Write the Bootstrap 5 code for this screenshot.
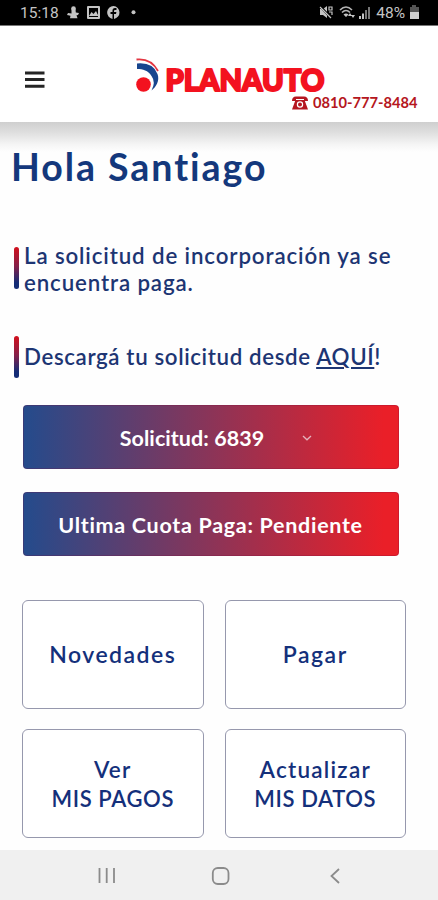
<!DOCTYPE html>
<html lang="es">
<head>
<meta charset="utf-8">
<meta name="viewport" content="width=device-width, initial-scale=1">
<title>Planauto</title>
<link href="https://cdn.jsdelivr.net/npm/bootstrap@5.3.0/dist/css/bootstrap.min.css" rel="stylesheet">
<style>
body{font-family:Lato,"Open Sans",sans-serif;color:#123277;background:#fefefe;height:900px;overflow:hidden}
.status{height:26px;background:#000;color:#c4c4c4;font:15.5px/26px Roboto,sans-serif;padding:1px 17px 0 20px;border-bottom:1px solid #777}
.status svg,.top svg,.keys svg{display:block}
.top{height:96px;padding:31px 20px 0 24px;background:#fff}
.burger{margin-top:14px;padding:0;border:0;background:none}
.brand-block{margin-left:89px;width:296px}
.fade-band{height:30px;background:linear-gradient(#cfcfcf,#dcdcdc 30%,#f5f5f5 75%,#fefefe)}
.hello{font-size:37.5px;line-height:42px;font-weight:700;letter-spacing:1.95px;margin:-6px 0 0 11px;color:#14387c}
.note{gap:5px;padding-left:14px;font-size:22.3px;line-height:27px;font-weight:600;letter-spacing:.87px;color:#1d3573;white-space:nowrap}
.note-bar{width:5px;height:42px;border-radius:3px;flex:none;background:linear-gradient(#d3101c,#872048 45%,#142c76 85%)}
.note a{color:inherit;text-underline-offset:2px;text-decoration-thickness:2px}
.note-one{margin-top:54px}.note-two{margin-top:39.5px;letter-spacing:.62px}
.note-one .note-bar{margin-top:5px}
.bars{padding:27px 39.5px 0 22.5px;gap:22.5px}
.grad{height:64.5px;border:1px solid rgba(120,10,60,.25);border-radius:4px;padding:2px 0 0;color:#fff;font-size:21.5px;font-weight:700;background:linear-gradient(90deg,#244b8c,#ea1f28 96%) border-box;white-space:nowrap}
.grad:hover{color:#fff}
.picker{padding-left:12px;gap:37px}
.tiles{margin:43.5px 32px 0 22px;display:grid;grid-template-columns:1fr 1fr;gap:20.5px 21px}
.tile{height:109px;border:1px solid #9698ad;border-radius:6px;color:#14307b;background:#fff;font-size:22px;line-height:29px;font-weight:600;padding:0;white-space:nowrap}
.keys{height:50px;background:#f0f0f0}
.w1{letter-spacing:.05px}.w2{letter-spacing:.7px}.w3{font-size:23px;letter-spacing:1.5px}.w4{letter-spacing:.6px}.w5{font-size:22.5px;letter-spacing:1.25px}
</style>
<script src="https://cdn.jsdelivr.net/npm/bootstrap@5.3.0/dist/js/bootstrap.bundle.min.js"></script>
</head>
<body class="d-flex flex-column">
<div class="status d-flex align-items-center justify-content-between flex-shrink-0">
  <div class="d-flex align-items-center">
    <span>15:18</span>
    <svg width="80" height="18" viewBox="59 5 80 18" fill="#c4c4c4"><circle cx="73.500" cy="9.500" r="2.300"/><path d="M71.500 10h4l.3 3.500 3.200.5-1 2-1.500.3 1 3H70l.5-2.500-3.500-.8 1-2 3.500.5z"/><path fill-rule="evenodd" d="M88 7h11q1 0 1 1v11q0 1-1 1H88q-1 0-1-1V8q0-1 1-1zm1 2v9h9V9z"/><path d="M89 17l2.500-4 2 2 2.500-3 2.500 5z"/><path d="M113.500 7a6.500 6.500 0 0 0-1 12.900V15h-2v-2h2v-1.500q0-2.500 2.500-2.500h1.500v2H115q-1 0-1 1V13h2.400l-.4 2h-2v4.900A6.500 6.500 0 0 0 113.500 7z"/><circle cx="133.500" cy="13.300" r="2"/></svg>
  </div>
  <div class="d-flex align-items-center">
    <svg width="58" height="18" viewBox="318 5 58 18" fill="#c4c4c4"><path d="M320 10h3l4-3v12l-4-3h-3z"/><path d="M320 7l11 12" stroke="#000" stroke-width="2.500"/><path d="M320 8l11 11M329 8h3v3h-3zm0 5h3v3" stroke="#c4c4c4" stroke-width="1.200" fill="none"/><path d="M340 11q6-6 12 0M342 13.500q4-4 8 0" fill="none" stroke="#b5b5b5" stroke-width="1.600"/><path d="M343.500 15.500q2.500-2 5 0L346 18zM350 14l2 3h-4zM353 19l-2-3h4z"/><path d="M359 17h2v3h-2zM362 14.500h2V20h-2z"/><path d="M365 11h2v9h-2zM368 8h2v12h-2z" fill="#777"/></svg>
    <span>48%</span>
    <svg class="ms-1" width="12" height="18" viewBox="410 5 12 18"><path d="M413 6h4v2h3v6h-9V8h2z" fill="#555"/><path d="M411 13h9v7h-9z" fill="#d0d0d0"/></svg>
  </div>
</div>
<header class="top d-flex flex-shrink-0">
  <button class="burger align-self-start" aria-label="Menú"><svg width="21" height="18" viewBox="0 0 21 18" stroke="#252525" stroke-width="3"><path d="M1 2h19.500M1 8.500h19.500M1 15.200h19.500"/></svg></button>
  <div class="brand-block">
    <svg width="296" height="56" viewBox="134 57 296 56">
      <path d="M136.500 59.500Q151 58 158 71" fill="none" stroke="#e33642" stroke-width="1.800"/>
      <path d="M137 63.500Q153 62 157.500 74C160 81 156 87 151.500 90.500Q156 82 151.500 76C148 70.500 143 69 137 69z" fill="#17458e"/>
      <circle cx="143.500" cy="84.500" r="7.300" fill="#f3121f"/>
      <text x="165.500" y="91" textLength="159" lengthAdjust="spacingAndGlyphs" font-family="Lato,sans-serif" font-size="31" font-weight="900" fill="#f3121f" stroke="#f3121f" stroke-width="2.200" stroke-linejoin="round">PLANAUTO</text>
      <g fill="#b51620"><path d="M292 101q0-4.500 4-4.500h8q4 0 4 4.500h-4v-2h-8v2zM295.500 100h9l3.500 9.500h-16z"/><circle cx="300" cy="104.500" r="2.600" fill="none" stroke="#fff" stroke-width="1.200"/></g>
      <text x="313" y="107.500" textLength="104.500" lengthAdjust="spacingAndGlyphs" font-family="Lato,sans-serif" font-size="15" font-weight="700" fill="#b51620">0810-777-8484</text>
    </svg>
  </div>
</header>
<div class="fade-band flex-shrink-0"></div>
<main class="flex-grow-1">
  <h1 class="hello">Hola Santiago</h1>
  <div class="note note-one d-flex"><span class="note-bar"></span><span>La solicitud de incorporación ya se<br>encuentra paga.</span></div>
  <div class="note note-two d-flex align-items-center"><span class="note-bar"></span><span>Descargá tu solicitud desde <a href="#">AQUÍ</a>!</span></div>
  <div class="bars d-flex flex-column">
    <button class="grad picker btn d-flex align-items-center justify-content-center"><span class="w1">Solicitud: 6839</span><svg width="12" height="8" viewBox="0 0 12 8" fill="none" stroke="#e5b3bd" stroke-width="1.300"><path d="M2 2l4 3.800L10 2"/></svg></button>
    <button class="grad btn"><span class="w2">Ultima Cuota Paga: Pendiente</span></button>
  </div>
  <div class="tiles">
    <button class="tile btn"><span class="w3">Novedades</span></button>
    <button class="tile btn"><span class="w3">Pagar</span></button>
    <button class="tile btn"><span class="w5">Ver</span><br><span class="w4">MIS PAGOS</span></button>
    <button class="tile btn"><span class="w5">Actualizar</span><br><span class="w4">MIS DATOS</span></button>
  </div>
</main>
<nav class="keys flex-shrink-0">
  <svg width="438" height="50" viewBox="0 850 438 50" fill="none" stroke="#8b8b8b" stroke-width="1.800"><path d="M99.500 868v15M106.700 868v15M114 868v15"/><rect x="212.800" y="868" width="15.700" height="16" rx="5"/><path d="M339 869l-7.500 7 7.500 7"/></svg>
</nav>
</body>
</html>
